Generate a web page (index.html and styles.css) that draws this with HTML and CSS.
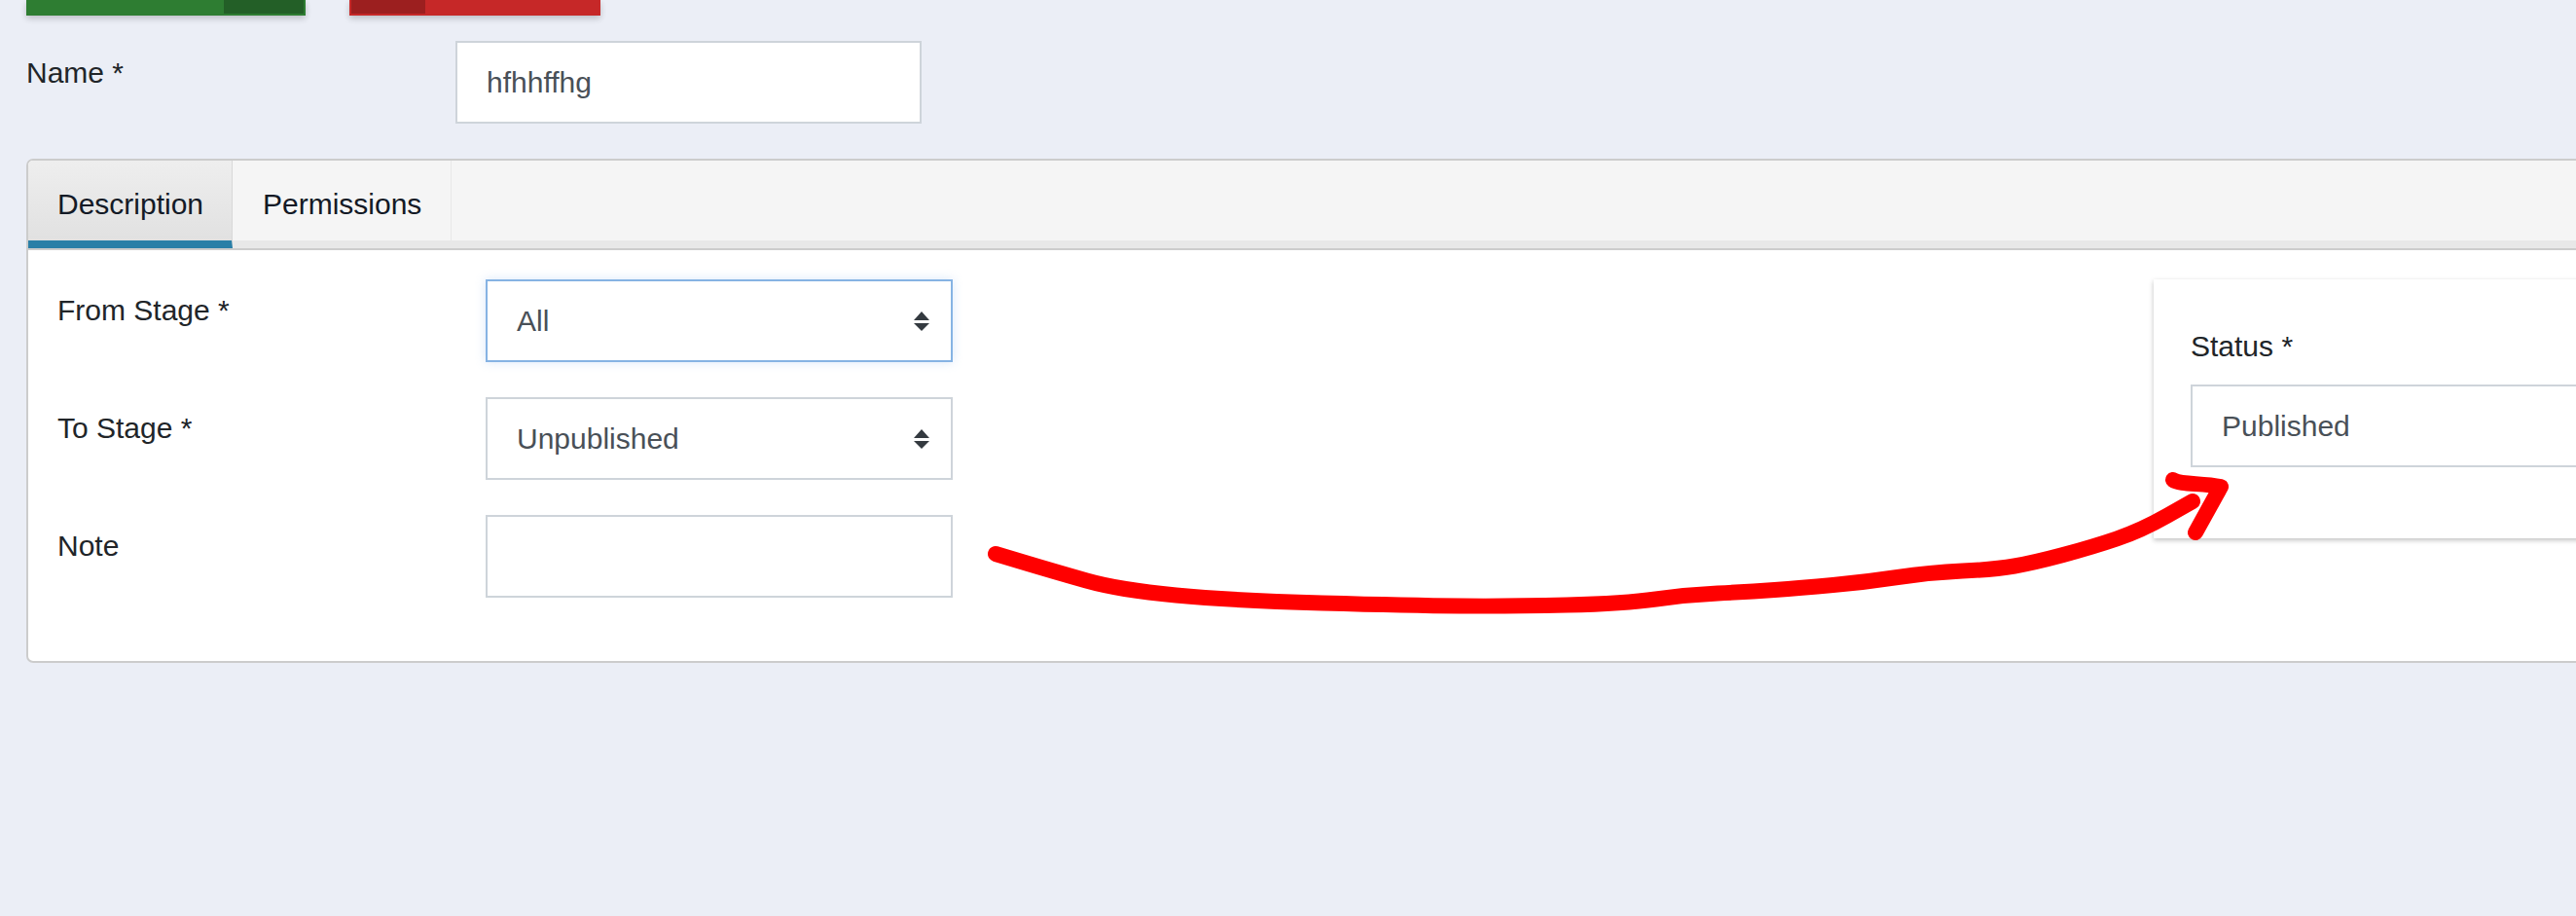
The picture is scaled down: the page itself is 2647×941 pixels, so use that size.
FILE: index.html
```html
<!DOCTYPE html>
<html lang="en">

<head>
    <meta charset="UTF-8">
    <meta name="viewport" content="width=device-width, initial-scale=1.0">
    <title>Transition</title>
    <link rel="stylesheet" href="styles.css">
</head>

<body>
    <div class="toolbar">
        <div class="btn btn-green"><span class="btn-icon"></span></div>
        <div class="btn btn-red"><span class="btn-icon"></span></div>
    </div>

    <div class="name-row">
        <label class="name-label">Name *</label>
        <div class="field field-name">hfhhffhg</div>
    </div>

    <div class="card">
        <div class="tabs">
            <div class="tab tab-active">Description</div>
            <div class="tab">Permissions</div>
        </div>

        <div class="card-body">
            <div class="form">
                <div class="form-row">
                    <label class="form-label">From Stage *</label>
                    <div class="field field-focus">
                        <span>All</span>
                        <svg class="updown" viewBox="0 0 16 20"><path d="M8 0L16 9H0zM0 12H16L8 20z" /></svg>
                    </div>
                </div>
                <div class="form-row">
                    <label class="form-label">To Stage *</label>
                    <div class="field">
                        <span>Unpublished</span>
                        <svg class="updown" viewBox="0 0 16 20"><path d="M8 0L16 9H0zM0 12H16L8 20z" /></svg>
                    </div>
                </div>
                <div class="form-row">
                    <label class="form-label">Note</label>
                    <div class="field"></div>
                </div>
            </div>

            <div class="side-panel">
                <label class="side-label">Status *</label>
                <div class="field field-wide">Published</div>
            </div>
        </div>
    </div>

    <!-- red arrow drawn on top of the screenshot -->
    <svg class="annotation" viewBox="0 0 2647 941">
        <path d="M1023 569L1053 578Q1083 587 1116.5 596.5Q1150 606 1208.5 611.5Q1267 617 1358.5 619.5Q1450 622 1500 622.5Q1550 623 1610 621.5Q1670 620 1701.5 615.5Q1733 611 1765 609.5Q1797 608 1823.5 606Q1850 604 1883.5 601Q1917 598 1950 593Q1983 588 2016.5 586.5Q2050 585 2070 581.5Q2090 578 2120 570Q2150 562 2175 553.5Q2200 545 2226.5 530L2253 515" />
        <path d="M2233 493C2240 498 2262 496 2282 500L2256 547" />
    </svg>
</body>

</html>
```

FILE: styles.css
```css
* {
    margin: 0;
    padding: 0;
    box-sizing: border-box;
}

html {
    height: 100%;
}

body {
    position: relative;
    height: 100%;
    overflow: hidden;
    background: #ebeef6;
    font-family: "Liberation Sans", Arial, sans-serif;
    font-size: 30px;
    color: #212529;
}

.toolbar {
    display: flex;
    gap: 45px;
    height: 16px;
    padding-left: 27px;
}

.btn {
    display: flex;
    height: 16px;
    box-shadow: 0 3px 6px rgba(0, 0, 0, 0.2);
}

.btn-icon {
    display: block;
    height: 14px;
}

.btn-green {
    width: 287px;
    justify-content: flex-end;
    padding-right: 2px;
    background: #2e7d32;
}

.btn-green .btn-icon {
    width: 82px;
    background: #235f27;
}

.btn-red {
    width: 258px;
    padding-left: 2px;
    background: #c62828;
}

.btn-red .btn-icon {
    width: 76px;
    background: #9c1f1f;
}

.name-row {
    display: flex;
    margin-top: 26px;
    padding-left: 27px;
}

.name-label {
    width: 441px;
    padding-top: 11px;
    line-height: 44px;
}

.field {
    display: flex;
    align-items: center;
    justify-content: space-between;
    width: 480px;
    height: 85px;
    padding: 0 22px 0 30px;
    border: 2px solid #ced4da;
    background: #fff;
    color: #495057;
}

.field-name {
    width: 479px;
}

.field-focus {
    border-color: #86b3e3;
    box-shadow: 0 0 10px rgba(128, 176, 235, 0.3);
}

.updown {
    display: block;
    width: 16px;
    height: 20px;
    fill: #343a40;
}

.card {
    width: 2800px;
    height: 518px;
    margin-top: 36px;
    margin-left: 27px;
    border: 2px solid #ccc;
    border-radius: 7px;
    background: #fff;
}

.tabs {
    display: flex;
    height: 92px;
    border-bottom: 2px solid #ccc;
    border-top-left-radius: 5px;
    background: linear-gradient(#f5f5f5 82px, #e8e8e8 82px);
}

.tab {
    height: 90px;
    padding: 27px 30px 0 31px;
    border-right: 1px solid #e8e8e8;
    line-height: 36px;
    color: #131a26;
}

.tab-active {
    width: 210px;
    padding-left: 30px;
    border-right: 1px solid #d8d8d8;
    border-bottom: 8px solid #2a7fa7;
    border-top-left-radius: 5px;
    background: linear-gradient(#eeeeee, #e1e1e1);
}

.card-body {
    display: flex;
    padding-top: 30px;
}

.form {
    display: flex;
    flex-direction: column;
    gap: 36px;
    width: 2184px;
    padding-left: 30px;
}

.form-row {
    display: flex;
}

.form-label {
    width: 440px;
    padding-top: 10px;
    line-height: 44px;
}

.side-panel {
    width: 600px;
    height: 266px;
    padding: 47px 0 0 38px;
    background: #fff;
    box-shadow: 0 2px 5px rgba(0, 0, 0, 0.25);
}

.side-label {
    display: block;
    height: 61px;
    line-height: 44px;
}

.field-wide {
    width: 560px;
}

.annotation {
    position: absolute;
    top: 0;
    left: 0;
    width: 2647px;
    height: 941px;
    fill: none;
    stroke: #ff0000;
    stroke-width: 16;
    stroke-linecap: round;
    stroke-linejoin: round;
}
```
